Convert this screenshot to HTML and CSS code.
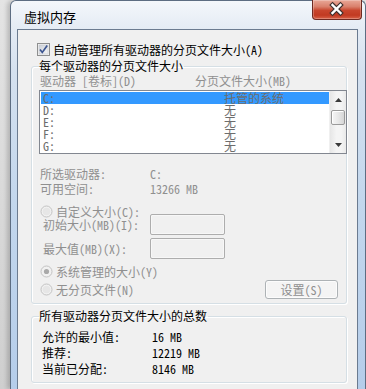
FILE: index.html
```html
<!DOCTYPE html>
<html lang="zh-CN">
<head>
  <meta charset="UTF-8" />
  <title>虚拟内存</title>
  <link rel="stylesheet" href="styles.css">
</head>
<body>
  <div class="window">
    <div class="titlebar">
      <span class="title">虚拟内存</span>
      <div class="close">
        <svg width="50" height="20" viewBox="0 0 50 20">
          <path d="M20.5 6 L28.5 14 M28.5 6 L20.5 14" stroke="#40302e" stroke-width="4.6" stroke-linecap="square" fill="none"/>
          <path d="M20.5 6 L28.5 14 M28.5 6 L20.5 14" stroke="#ffffff" stroke-width="2.4" stroke-linecap="square" fill="none"/>
        </svg>
      </div>
    </div>

    <div class="client">
      <div class="check-row">
        <svg class="checkbox" width="13" height="13" viewBox="0 0 13 13">
          <defs>
            <linearGradient id="cbfill" x1="0" y1="0" x2="1" y2="1">
              <stop offset="0" stop-color="#cbd0d8"/>
              <stop offset="1" stop-color="#f6f6f6"/>
            </linearGradient>
          </defs>
          <rect x="0.5" y="0.5" width="12" height="12" fill="#f4f4f4" stroke="#8e8f8f"/>
          <rect x="2" y="2" width="9" height="9" fill="url(#cbfill)" stroke="#c2c6cc" stroke-width="0.6"/>
          <path d="M3 6.4 L5.3 9.4 L10.2 2.6" stroke="#3c5590" stroke-width="1.7" fill="none"/>
        </svg>
        <span>自动管理所有驱动器的分页文件大小(A)</span>
      </div>

      <fieldset class="group group-drives">
        <legend>每个驱动器的分页文件大小</legend>

        <div class="cols disabled">
          <span class="col-drive">驱动器 [卷标](D)</span>
          <span>分页文件大小(MB)</span>
        </div>

        <div class="listbox">
          <div class="rows">
            <div class="row selected"><span class="drive">C:</span><span>托管的系统</span></div>
            <div class="row"><span class="drive">D:</span><span>无</span></div>
            <div class="row"><span class="drive">E:</span><span>无</span></div>
            <div class="row"><span class="drive">F:</span><span>无</span></div>
            <div class="row"><span class="drive">G:</span><span>无</span></div>
          </div>
          <div class="scrollbar">
            <div class="sb-btn">
              <svg width="7" height="4" viewBox="0 0 7 4"><polygon points="3.5,0 7,4 0,4" fill="#3a3a3a"/></svg>
            </div>
            <div class="sb-thumb"></div>
            <div class="sb-track"></div>
            <div class="sb-btn">
              <svg width="7" height="4" viewBox="0 0 7 4"><polygon points="0,0 7,0 3.5,4" fill="#3a3a3a"/></svg>
            </div>
          </div>
        </div>

        <div class="info disabled">
          <div class="info-row"><span class="info-label">所选驱动器:</span><span>C:</span></div>
          <div class="info-row"><span class="info-label">可用空间:</span><span>13266 MB</span></div>
        </div>

        <div class="radio-row radio-custom disabled">
          <svg class="radio" width="13" height="13" viewBox="0 0 13 13">
            <circle cx="6.5" cy="6.5" r="5.5" fill="#f1f1f1" stroke="#c3c3c3"/>
            <circle cx="6.5" cy="6.5" r="3.8" fill="#e6e6e6"/>
          </svg>
          <span>自定义大小(C):</span>
        </div>

        <div class="size-row size-first disabled">
          <span class="size-label">初始大小(MB)(I):</span>
          <span class="textbox"></span>
        </div>
        <div class="size-row disabled">
          <span class="size-label">最大值(MB)(X):</span>
          <span class="textbox"></span>
        </div>

        <div class="radio-row radio-system disabled">
          <svg class="radio" width="13" height="13" viewBox="0 0 13 13">
            <circle cx="6.5" cy="6.5" r="5.5" fill="#f1f1f1" stroke="#c3c3c3"/>
            <circle cx="6.5" cy="6.5" r="2.6" fill="#a9a9a9"/>
          </svg>
          <span>系统管理的大小(Y)</span>
        </div>

        <div class="radio-row radio-none disabled">
          <svg class="radio" width="13" height="13" viewBox="0 0 13 13">
            <circle cx="6.5" cy="6.5" r="5.5" fill="#f1f1f1" stroke="#c3c3c3"/>
            <circle cx="6.5" cy="6.5" r="3.8" fill="#e6e6e6"/>
          </svg>
          <span>无分页文件(N)</span>
          <span class="btn">设置(S)</span>
        </div>
      </fieldset>

      <fieldset class="group group-total">
        <legend>所有驱动器分页文件大小的总数</legend>
        <div class="total-row"><span class="total-label">允许的最小值:</span><span>16 MB</span></div>
        <div class="total-row"><span class="total-label">推荐:</span><span>12219 MB</span></div>
        <div class="total-row"><span class="total-label">当前已分配:</span><span>8146 MB</span></div>
      </fieldset>
    </div>
  </div>
</body>
</html>
```

FILE: styles.css
```css
* {
  box-sizing: border-box;
}

html, body {
  margin: 0;
  height: 100%;
}

body {
  background: linear-gradient(to bottom, #e4e4e4, #cfcfcf);
  font-family: "Noto Sans Mono CJK SC", "Noto Sans CJK SC", sans-serif;
  font-size: 12px;
  line-height: 12px;
  color: #000;
  overflow: hidden;
}

.window {
  display: flex;
  flex-direction: column;
  margin-left: 10px;
  width: 356px;
  height: 389px;
  border: 1px solid #5d6d82;
  border-bottom: 0;
  border-radius: 6px 6px 0 0;
  padding: 0 7px 0 6px;
  background: linear-gradient(to bottom, #f4f7fb 0, #e4ebf4 28px, #d5e1ef 70px, #c3d7ed 200px, #b5cdea 389px);
  box-shadow: -3px 0 4px rgba(0, 0, 0, 0.18);
}

.titlebar {
  display: flex;
  align-items: flex-start;
  height: 28px;
  flex: none;
}

.title {
  padding: 9px 0 0 7px;
  font-family: "Noto Sans CJK SC", sans-serif;
  font-size: 13px;
  line-height: 13px;
}

.close {
  margin: -1px -4px 0 auto;
  width: 50px;
  height: 20px;
  border: 1px solid #6e2a22;
  border-top: 0;
  border-radius: 0 0 4px 4px;
  background: linear-gradient(to bottom, #e9a898 0, #d9806c 35%, #c8452d 55%, #c13a22 80%, #d86248 100%);
  box-shadow: inset 0 0 0 1px rgba(255, 255, 255, 0.25);
}

.close svg {
  display: block;
  margin: -1px 0 0 -1px;
}

.client {
  flex: 1;
  min-height: 0;
  overflow: hidden;
  border: 1px solid #6b7b90;
  border-bottom: 0;
  background: #f0f0f0;
  padding: 13px 10px 0 13px;
}

.check-row {
  display: flex;
  align-items: center;
  gap: 3px;
  height: 13px;
  margin-left: 6px;
}

.checkbox {
  display: block;
  flex: none;
}

.group {
  margin: 4px 0 0;
  width: 316px;
  border: 1px solid #d5dfe5;
  border-radius: 3px;
  box-shadow: inset 1px 1px 0 #fff, 1px 1px 0 #fff;
  min-width: 0;
}

.group legend {
  padding: 0 1px 0 0;
  line-height: 12px;
}

.group-drives {
  padding: 3px 0 4px 7px;
}

.disabled {
  color: #8f8f8f;
}

.cols {
  display: flex;
  height: 12px;
}

.col-drive {
  width: 156px;
  padding-left: 1px;
}

.listbox {
  display: flex;
  margin: 3px -1px 0 0;
  height: 64px;
  border: 1px solid #828790;
  background: #fff;
}

.rows {
  flex: 1;
  padding: 1px 0 0 1px;
  color: #6d6d6d;
}

.row {
  display: flex;
  height: 12px;
  padding-left: 2px;
}

.row.selected {
  background: #3399ff;
}

.drive {
  width: 181px;
}

.scrollbar {
  display: flex;
  flex-direction: column;
  width: 17px;
  background: linear-gradient(to right, #e6e6e6, #f4f4f4 40%, #f4f4f4 70%, #e9e9e9);
  border-left: 1px solid #f0f0f0;
}

.sb-btn {
  display: flex;
  align-items: center;
  justify-content: center;
  height: 17px;
}

.sb-btn svg {
  display: block;
}

.sb-thumb {
  margin: 2px 1px 0;
  height: 15px;
  border: 1px solid #9a9a9a;
  border-radius: 2px;
  background: linear-gradient(to right, #f6f6f6, #e8e8e8 50%, #d6d6d6);
  box-shadow: inset 1px 1px 0 #fff;
}

.sb-track {
  flex: 1;
}

.info {
  margin-top: 12px;
}

.info-row {
  display: flex;
  height: 15px;
  line-height: 15px;
}

.info-label {
  width: 111px;
  padding-left: 1px;
}

.radio-row {
  display: flex;
  align-items: center;
  gap: 3px;
  height: 13px;
  padding-left: 1px;
}

.radio {
  display: block;
  flex: none;
}

.radio-custom {
  margin-top: 9px;
}

.size-row {
  display: flex;
  align-items: center;
  height: 21px;
  margin-top: 3px;
}

.size-first {
  margin-top: -4px;
}

.size-label {
  width: 111px;
  padding-left: 4px;
}

.textbox {
  width: 75px;
  height: 21px;
  border: 1px solid #adadad;
  border-radius: 2px;
  background: #f0f0f0;
  box-shadow: inset 0 0 0 1px #f7f7f7;
}

.radio-system {
  margin-top: 6px;
}

.radio-none {
  margin-top: 2px;
  height: 19px;
}

.btn {
  margin: 0 8px 0 auto;
  width: 73px;
  height: 19px;
  border: 1px solid #adb2b5;
  border-radius: 3px;
  background: #f4f4f4;
  box-shadow: inset 0 0 0 1px #fcfcfc;
  text-align: center;
  line-height: 17px;
  color: #8f8f8f;
}

.group-total {
  margin-top: 6px;
  padding: 7px 0 5px 7px;
}

.total-row {
  display: flex;
  height: 16px;
  line-height: 16px;
}

.total-label {
  width: 113px;
  padding-left: 3px;
}
```
